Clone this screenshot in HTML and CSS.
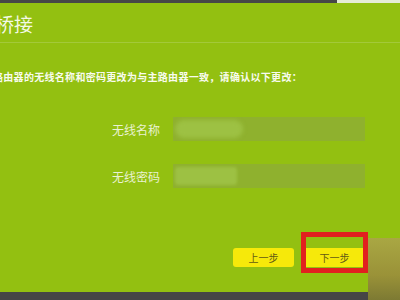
FILE: index.html
```html
<!DOCTYPE html>
<html lang="zh-CN">
<head>
<meta charset="utf-8">
<link rel="stylesheet" href="styles.css">
</head>
<body>
<div class="page">
  <div class="topbar"><div class="topbar-dark"></div><div class="topbar-light"></div></div>
  <h1 class="title">桥接</h1>
  <div class="divider"></div>
  <p class="intro">路由器的无线名称和密码更改为与主路由器一致，请确认以下更改：</p>
  <div class="form">
    <label class="label">无线名称</label>
    <div class="field"><span class="blur blur-a"></span></div>
    <label class="label">无线密码</label>
    <div class="field"><span class="blur blur-b"></span></div>
  </div>
  <div class="actions">
    <button class="btn btn-prev">上一步</button>
    <div class="highlight"><button class="btn">下一步</button></div>
  </div>
  <div class="bottombar"></div>
  <div class="corner"></div>
</div>
</body>
</html>
```
FILE: styles.css
```css
html, body {
  margin: 0;
  padding: 0;
}
body {
  width: 400px;
  height: 300px;
  overflow: hidden;
  background: #93c011;
  font-family: "Noto Sans CJK SC", "Noto Sans", sans-serif;
}
.page {
  position: relative;
  width: 400px;
  height: 300px;
  display: flex;
  flex-direction: column;
}
.topbar {
  display: flex;
  height: 3px;
}
.topbar-dark {
  width: 337px;
  background: #474747;
}
.topbar-light {
  flex: 1;
  background: #e6ecd6;
}
.title {
  margin: 8px 0 0 -5px;
  height: 30px;
  font-size: 19px;
  font-weight: 400;
  line-height: 26px;
  color: #f4f9e6;
}
.divider {
  height: 1px;
  background: #a3c93a;
  margin-top: 1px;
}
.intro {
  margin: 27px 0 0 -7px;
  font-size: 10px;
  font-weight: 700;
  line-height: 14px;
  letter-spacing: 0.3px;
  color: #f8fbee;
  white-space: nowrap;
}
.form {
  display: grid;
  grid-template-columns: 160px 192px;
  column-gap: 13px;
  row-gap: 23px;
  align-items: center;
  margin-top: 33px;
}
.label {
  justify-self: end;
  font-size: 12px;
  color: #e9f2d2;
}
.field {
  height: 24px;
  background: #8fb12e;
  display: flex;
  align-items: center;
  padding-left: 2px;
  overflow: hidden;
}
.blur {
  height: 18px;
  border-radius: 9px;
  background: #9dc143;
  filter: blur(2px);
}
.blur-a { width: 68px; }
.blur-b { width: 62px; border-radius: 3px; filter: blur(1.5px); }
.actions {
  display: flex;
  align-items: flex-end;
  margin: 44px 0 0 233px;
  gap: 7px;
}
.btn {
  width: 61px;
  height: 19px;
  border: none;
  border-radius: 3px;
  background: #f6e90a;
  color: #635a14;
  font-family: "Noto Sans CJK SC", sans-serif;
  font-size: 10px;
  padding: 0;
}
.btn-prev {
  margin-bottom: 6px;
}
.highlight {
  border: 5px solid #e1211f;
  padding: 11px 0 1px 0;
  width: 57px;
  display: flex;
}
.highlight .btn {
  width: 57px;
  border-radius: 0;
}
.bottombar {
  position: absolute;
  left: 0;
  bottom: 0;
  width: 400px;
  height: 8px;
  background: #464646;
}
.corner {
  position: absolute;
  right: 0;
  bottom: 0;
  width: 32px;
  height: 62px;
  background: linear-gradient(180deg, #a9a743 0%, #9a9238 60%, #7d7a33 100%);
}
```
